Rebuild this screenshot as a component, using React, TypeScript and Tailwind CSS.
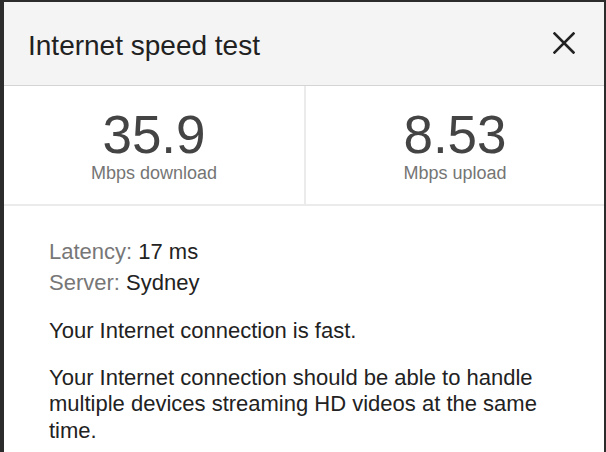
import React from 'react';

const font = { fontFamily: '"Liberation Sans", Arial, sans-serif' };

function CloseIcon() {
  return (
    <svg width="22" height="22" viewBox="0 0 22 22" className="block">
      <path d="M1.5 1.5 L20.5 20.5 M20.5 1.5 L1.5 20.5" stroke="#222" strokeWidth="2.6" strokeLinecap="square" fill="none" />
    </svg>
  );
}

function Stat({ value, label, divider }: { value: string; label: string; divider?: boolean }) {
  return (
    <div className={`flex flex-col items-center pt-[22px] ${divider ? 'border-l-2 border-[#ebebeb]' : ''}`}>
      <div className="text-[53px] leading-[53px] text-[#444]">{value}</div>
      <div className="mt-[3px] text-[18px] leading-[18px] text-[#757575]">{label}</div>
    </div>
  );
}

export default function App() {
  return (
    <div className="w-[606px] h-[452px] overflow-hidden bg-[#2c2c2c] pt-[2px] pl-[4px] pr-[2px]" style={font}>
      <div className="h-full bg-white">
        {/* Header */}
        <div className="h-[84px] bg-[#f4f4f4] border-b border-[#d4d4d4] flex items-center justify-between pl-[24px] pr-[29px]">
          <h1 className="pt-[4px] text-[28px] leading-none text-[#212121]">Internet speed test</h1>
          <button className="-mt-[2px]">
            <CloseIcon />
          </button>
        </div>

        {/* Results */}
        <div className="grid grid-cols-2 h-[120px] border-b-2 border-[#ebebeb]">
          <Stat value="35.9" label="Mbps download" />
          <Stat value="8.53" label="Mbps upload" divider />
        </div>

        {/* Details */}
        <div className="pl-[45px] pr-6 pt-[32px] text-[22px] text-[#222]">
          <div className="leading-[28px]">
            <span className="text-[#777]">Latency:</span> 17 ms
          </div>
          <div className="mt-[3px] leading-[28px]">
            <span className="text-[#777]">Server:</span> Sydney
          </div>
          <p className="mt-[21px] leading-[26.5px]">Your Internet connection is fast.</p>
          <p className="mt-[20px] w-[500px] leading-[26.5px]">
            Your Internet connection should be able to handle multiple devices streaming HD videos at the same time.
          </p>
        </div>
      </div>
    </div>
  );
}
